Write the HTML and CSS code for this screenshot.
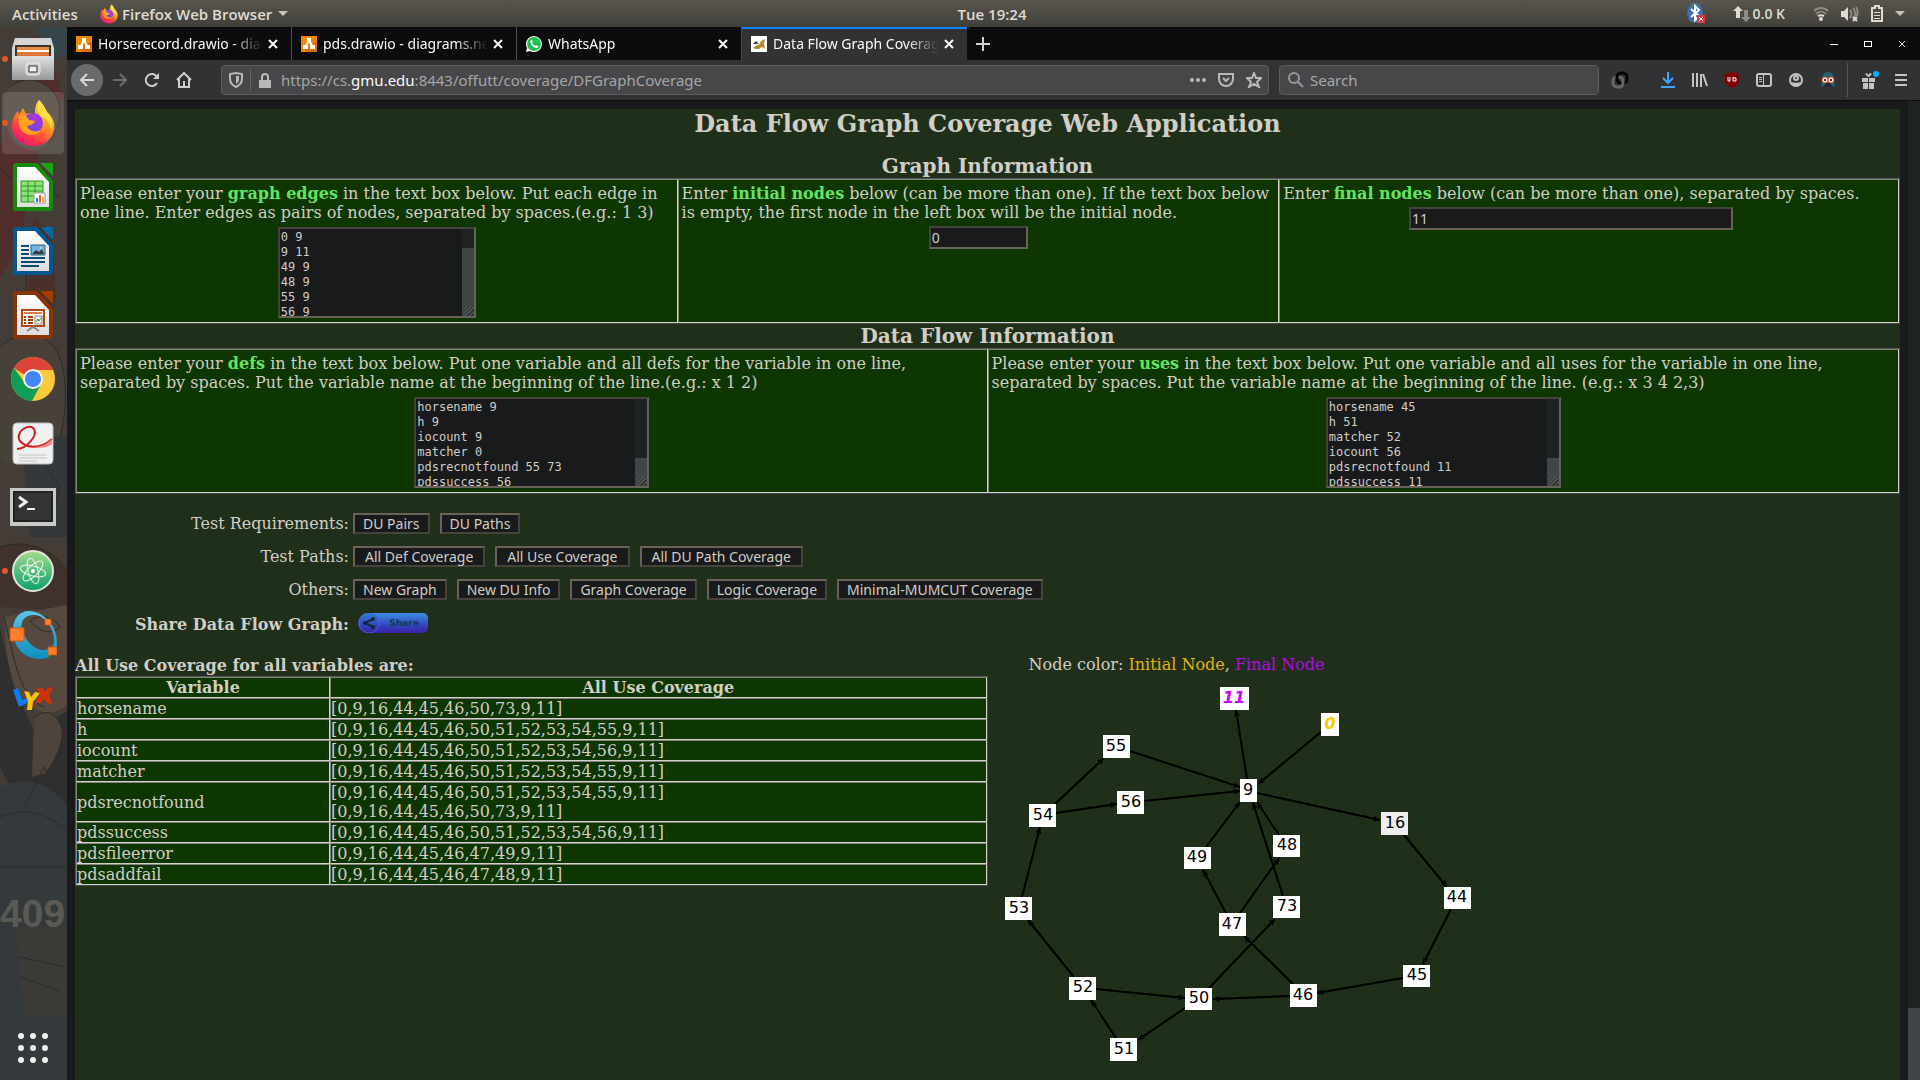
FILE: index.html
```html
<!DOCTYPE html>
<html lang="en">
<head>
<meta charset="utf-8">
<title>Data Flow Graph Coverage Web Application</title>
<link rel="stylesheet" href="styles.css">
</head>
<body>
<svg class="defs" aria-hidden="true">
  <defs>
    <linearGradient id="gFox" x1="0.8" y1="0" x2="0.2" y2="1"><stop offset="0" stop-color="#fff14a"/><stop offset=".4" stop-color="#ff9a1f"/><stop offset=".75" stop-color="#ff3647"/><stop offset="1" stop-color="#e31587"/></linearGradient>
    <radialGradient id="gGlobe" cx=".6" cy=".3" r=".8"><stop offset="0" stop-color="#b833e1"/><stop offset="1" stop-color="#5a4bd8"/></radialGradient>
    <linearGradient id="gSteel" x1="0" y1="0" x2="0" y2="1"><stop offset="0" stop-color="#e2e2e2"/><stop offset="1" stop-color="#989898"/></linearGradient>
    <linearGradient id="gAtom" x1="0" y1="0" x2="0" y2="1"><stop offset="0" stop-color="#a4dc8c"/><stop offset="1" stop-color="#0aa06f"/></linearGradient>
    <linearGradient id="gPaper" x1="0" y1="0" x2="0" y2="1"><stop offset="0" stop-color="#ffffff"/><stop offset="1" stop-color="#dedede"/></linearGradient>
    <linearGradient id="gRing" x1="0" y1="0" x2="0" y2="1"><stop offset="0" stop-color="#5cc4e6"/><stop offset="1" stop-color="#0d8fc0"/></linearGradient>
    <linearGradient id="gShare" x1="0" y1="0" x2="0" y2="1"><stop offset="0" stop-color="#2f7fd8"/><stop offset=".6" stop-color="#3346bd"/><stop offset="1" stop-color="#3d1fa8"/></linearGradient>
    <symbol id="fox" viewBox="0 0 44 48">
      <path d="M28 1c4 4 6 8 8 12 6 5 8 11 7 17-1 10-10 17-21 17S1 39 1 28c0-6 2-12 6-16l1 4 4-7 3 6c4-1 7 0 9 1 0-6 0-10 4-15z" fill="url(#gFox)"/>
      <circle cx="22" cy="24" r="10" fill="url(#gGlobe)"/>
      <path d="M8 16c4-2 8 1 10 5l6 1c-1 3-4 4-8 5 2 5 8 7 14 4-4 6-14 7-19 1-3-4-4-10-3-16z" fill="#ffa222"/>
      <path d="M28 1c4 4 6 8 8 12 5 5 6 12 4 17-1-6-4-10-9-12-4-3-5-10-3-17z" fill="#ffe047"/>
    </symbol>
    <symbol id="drawio" viewBox="0 0 16 16"><path fill="#f08705" d="M0 0h16v16H0z"/><path d="M16 5v11H6L3 13z" fill="#df6c0c"/><path d="M8 4 4 12M8 4l4 8" stroke="#fff" stroke-width="2"/><path d="M6 2h4v4H6zM2 9h5v4H2zM9 9h5v4H9z" fill="#fff"/></symbol>
    <symbol id="close" viewBox="0 0 12 12"><path d="m2 2 8 8M10 2l-8 8" stroke="currentColor" stroke-width="2" fill="none"/></symbol>
    <marker id="tip" viewBox="0 0 8 6" refX="7" refY="3" markerWidth="8" markerHeight="6" markerUnits="userSpaceOnUse" orient="auto"><path d="M0 0l8 3-8 3 2-3z"/></marker>
  </defs>
</svg>

<header class="topbar">
  <button class="top-btn activities">Activities</button>
  <button class="top-btn app"><svg width="18" height="20"><use href="#fox"/></svg>Firefox Web Browser<i class="caret"></i></button>
  <time class="clock">Tue 19:24</time>
  <div class="tray">
    <svg width="18" height="22" viewBox="0 0 18 22"><ellipse cx="8" cy="10" rx="8" ry="10" fill="#3d6eb4"/><path d="m4 6 8 7-4 4V3l4 4-8 7" fill="none" stroke="#fff" stroke-width="2"/><path d="M10 12h8v8h-8z" fill="#e9363c"/><path d="m12 14 4 4m0-4-4 4" stroke="#fff"/></svg>
    <span class="net"><svg width="18" height="18" viewBox="0 0 18 18"><path d="m5 1 5 5H7v7H3V6H0z" fill="#dfdbd2"/><path d="m13 17-5-5h3V5h4v7h3z" fill="#8f8c86"/></svg>0.0 K</span>
    <svg width="16" height="16" viewBox="0 0 16 16" fill="none" stroke="#8d8a84" stroke-width="2"><path d="M1 5c4-4 10-4 14 0M3 8c3-3 7-3 10 0"/><path d="M5 10c2-1 4-1 6 0" stroke="#dfdbd2"/><circle cx="8" cy="13" r="1" stroke="#dfdbd2"/></svg>
    <svg width="18" height="16" viewBox="0 0 18 16"><path d="M0 5h3l4-4v14l-4-4H0z" fill="#dfdbd2"/><path d="M9 4c2 2 2 6 0 8M12 2c3 4 3 8 0 11M15 1c2 3 2 6 1 9" fill="none" stroke="#8d8a84" stroke-width="2"/><path d="m12 11 4 4m0-4-4 4" stroke="#dfdbd2" stroke-width="2"/></svg>
    <svg width="12" height="17" viewBox="0 0 12 17"><path d="M1 3h3V1h4v2h3v13H1z" fill="none" stroke="#dfdbd2" stroke-width="2"/><path d="M3 7h6v1H3zm0 3h6v1H3zm0 3h6v1H3z" fill="#dfdbd2"/></svg>
    <i class="caret"></i>
  </div>
</header>

<div class="desktop">
  <nav class="dock" aria-label="Applications">
    <svg class="wall" viewBox="0 0 67 1053" preserveAspectRatio="xMidYMin slice" aria-hidden="true">
      <path fill="#443c37" d="M0 0h67v1053H0z"/>
      <path d="M0 120l14-50 18-60h10l22 60-20 40-14 50-10 60-20 30z" fill="#512d2b"/>
      <path d="M36 0h31v26l-14 8z" fill="#36454a"/><path d="M34 190l18 20 4 60-14 60-16-50z" fill="#4a2f2b"/>
      <path d="M10 60c14-12 34-8 44 6s6 36-6 50-34 6-40-12-6-34 2-44z" fill="#4e463e"/>
      <path d="M0 320c16-14 40-18 54 0s14 60 6 90-40 40-60 20z" fill="#48413a"/>
      <path d="M22 410h45v100H30z" fill="#34383b"/>
      <path d="M0 520c24-8 52 0 67 24v40L0 580z" fill="#3f322d"/>
      <path d="M4 590l63-12v100c-14 12-30 10-44-6S6 630 4 590z" fill="#554940"/>
      <path d="M0 600l14 60 20 44 33-20v110L20 780 0 740z" fill="#302f2f"/>
      <path d="M34 692c8-10 20-8 26 4s0 30-14 50l-14 4z" fill="#4d443b"/>
      <path d="M0 760c20-10 50-8 67 20v273H0z" fill="#343a3b"/>
      <path d="M16 900h51v90H24z" fill="#3b3b38"/>
      <g fill="none" stroke="#2c2b29" stroke-width="1"><path d="M10 60c14-12 34-8 44 6s6 36-6 50M0 320c16-14 40-18 54 0s14 60 6 90M4 590c12 50 16 80 40 90M30 594c10-8 24-4 30 6-8 8-20 6-30-6zM34 692c8-10 20-8 26 4s0 30-14 50M0 140c10 20 30 10 60 30M6 200c20 20 30 60 8 90M40 430l20 30-10 40M0 520c24-8 52 0 67 24M0 790c20-8 44-8 67 14M0 840h67M20 930l44 10M20 950l40 14M24 780l20-40 14 30"/></g>
      <text class="stencil" x="0" y="900">409</text>
    </svg>
    <button class="launcher running" aria-label="Files"><svg width="44" height="46" viewBox="0 0 44 46"><path d="M4 2h36l3 10v30H1V12z" fill="#d5d5d5"/><path d="M4 9h36v12H4z" fill="#3a3632"/><path d="M6 11h32v3H6z" fill="#e98d45"/><path d="M6 14h32v2H6z" fill="#fff"/><path d="M6 16h32v5H6z" fill="#df7437"/><path d="M1 20h42v24H1z" fill="url(#gSteel)"/><rect x="15" y="27" width="14" height="12" rx="3" fill="#ccc" stroke="#eee"/><path d="M18 30h8v6h-8z" fill="#eee" stroke="#333" stroke-width="1"/></svg></button>
    <button class="launcher running active" aria-label="Firefox"><svg width="44" height="48"><use href="#fox"/></svg></button>
    <button class="launcher" aria-label="Calc"><svg width="40" height="48" viewBox="0 0 40 48"><path d="M3 0h21l16 18v27q0 3-3 3H3q-3 0-3-3V3q0-3 3-3z" fill="#178a0d"/><path d="M27 0h13v13z" fill="#1ba60d"/><path d="M4 4h18l14 15v25H4z" fill="url(#gPaper)"/><path d="M8 18h22v21H8z" fill="#8ee07a"/><path d="M8 18h22v21H8zM8 23h22M8 28h22M8 33h22M15 18v21M22 18v21" fill="none" stroke="#2f9a20"/><path d="M21 30h11v10H21z" fill="#fff" stroke="#999"/><path d="M23 35h2v4h-2z" fill="#2a7ac0"/><path d="M26 32h2v7h-2z" fill="#e5641c"/><path d="M29 34h2v5h-2z" fill="#f2b134"/></svg></button>
    <button class="launcher" aria-label="Writer"><svg width="40" height="48" viewBox="0 0 40 48"><path d="M3 0h21l16 18v27q0 3-3 3H3q-3 0-3-3V3q0-3 3-3z" fill="#045791"/><path d="M27 0h13v13z" fill="#0369a3"/><path d="M4 4h18l14 15v25H4z" fill="url(#gPaper)"/><path d="M8 19h8M8 23h8M8 27h8M8 31h24M8 35h24M8 39h18" stroke="#0a4b76" stroke-width="2"/><path d="M18 18h14v10H18z" fill="#6db7e8" stroke="#2a5a80"/><path d="M19 27l4-4 3 2 3-3 2 5z" fill="#3b3a30"/><circle cx="28" cy="21" r="1" fill="#ffd94a"/></svg></button>
    <button class="launcher" aria-label="Impress"><svg width="40" height="48" viewBox="0 0 40 48"><path d="M3 0h21l16 18v27q0 3-3 3H3q-3 0-3-3V3q0-3 3-3z" fill="#8c3305"/><path d="M27 0h13v13z" fill="#a33e03"/><path d="M4 4h18l14 15v25H4z" fill="url(#gPaper)"/><path d="M9 19h22v16H9z" fill="#fff" stroke="#b4470f" stroke-width="2"/><path d="M11 22h18" stroke="#e07b45" stroke-width="2"/><path d="M11 26h2M11 29h2M11 32h2M15 26h5M15 29h5M15 32h5" stroke="#a33e03" stroke-width="2"/><path d="M22 25h7v8h-7z" fill="#eee" stroke="#888"/><path d="m23 31 2-3 1 2 3-4" fill="none" stroke="#2f9a20"/><path d="m14 40 6-4 6 4" fill="none" stroke="#888" stroke-width="2"/></svg></button>
    <button class="launcher" aria-label="Chrome"><svg width="44" height="44" viewBox="0 0 44 44"><circle cx="22" cy="22" r="22" fill="#fbc93c"/><path d="M3 11a22 22 0 0 1 38 0l1 2H22a9 9 0 0 0-8 5z" fill="#db4437"/><path d="M3 11a22 22 0 0 0 18 33l9-17a9 9 0 0 1-16-1z" fill="#0f9d58"/><circle cx="22" cy="22" r="10" fill="#f2f2f2"/><circle cx="22" cy="22" r="8" fill="#4285f4"/></svg></button>
    <button class="launcher" aria-label="Document Viewer"><svg width="42" height="43" viewBox="0 0 42 43"><rect x="1" y="1" width="40" height="41" rx="4" fill="#f0f0f0" stroke="#bbb"/><path d="M40 17C28 28 14 26 8 19 2 10 18 0 22 7s-8 20-17 20" fill="none" stroke="#cf1f22" stroke-width="2"/><path d="M40 17c-6 6-12 8-18 8 8 2 14 0 18-3z" fill="#e88"/><path d="M7 33h28M7 36h28M7 39h18" stroke="#c4c4c4"/></svg></button>
    <button class="launcher" aria-label="Terminal"><svg width="46" height="38" viewBox="0 0 46 38"><path d="M0 0h46v38H0z" fill="#c9c9c6"/><path d="M3 3h40v31H3z" fill="#222"/><path d="M5 5h36v27H5z" fill="#333535"/><path d="m9 9 7 5-7 5" fill="none" stroke="#eee" stroke-width="3"/><path d="M17 21h8" stroke="#eee" stroke-width="2"/></svg></button>
    <button class="launcher running" aria-label="Atom"><svg width="42" height="42" viewBox="0 0 42 42"><circle cx="21" cy="21" r="20" fill="url(#gAtom)" stroke="#dfe8dc" stroke-width="2"/><g fill="none" stroke="#eaf6ea" stroke-width="1"><ellipse cx="21" cy="21" rx="13" ry="5" transform="rotate(15 21 21)"/><ellipse cx="21" cy="21" rx="13" ry="5" transform="rotate(75 21 21)"/><ellipse cx="21" cy="21" rx="13" ry="5" transform="rotate(135 21 21)"/></g><circle cx="21" cy="21" r="2" fill="#fff"/></svg></button>
    <button class="launcher" aria-label="Octave"><svg width="48" height="48" viewBox="0 0 48 48"><path fill-rule="evenodd" d="M20 0C34 0 48 14 48 32 48 42 40 48 31 48 15 48 4 36 4 19 4 8 10 0 20 0zM25 4c-9 0-14 6-12 14 3 13 14 22 23 21 8-1 10-7 9-13C43 14 34 4 25 4z" fill="url(#gRing)"/><path d="M1 17h14v13H1z" fill="#ff7f2a" stroke="#c65a12" stroke-width="1"/><path d="M36 8h6v6h-6zM39 36h9v8h-9z" fill="#ff7f2a" stroke="#c65a12" stroke-width="1"/></svg></button>
    <button class="launcher" aria-label="LyX"><svg width="42" height="26" viewBox="0 0 42 26"><path d="m1 4 5-2 4 12 6-2 1 4-10 5z" fill="#0a7cf5"/><path d="m12 5 5 1 2 5 4-5 5 1-7 9-1 8h-5l1-9z" fill="#ffc20a"/><path d="m25 2 6 0 2 4 4-5 4 1-4 7 3 9-5-1-3-4-4 4-5 0 5-8z" fill="#cf3206"/></svg></button>
    <button class="launcher apps" aria-label="Show Applications"><svg width="30" height="30" viewBox="0 0 30 30" fill="#eee"><circle cx="3" cy="3" r="3"/><circle cx="15" cy="3" r="3"/><circle cx="27" cy="3" r="3"/><circle cx="3" cy="15" r="3"/><circle cx="15" cy="15" r="3"/><circle cx="27" cy="15" r="3"/><circle cx="3" cy="27" r="3"/><circle cx="15" cy="27" r="3"/><circle cx="27" cy="27" r="3"/></svg></button>
  </nav>

  <div class="window">
    <div class="tabstrip">
      <div class="tab"><svg width="16" height="16"><use href="#drawio"/></svg><span class="tab-title">Horserecord.drawio - diagrams.net</span><button class="x" aria-label="Close tab"><svg width="12" height="12"><use href="#close"/></svg></button></div>
      <div class="tab"><svg width="16" height="16"><use href="#drawio"/></svg><span class="tab-title">pds.drawio - diagrams.net</span><button class="x" aria-label="Close tab"><svg width="12" height="12"><use href="#close"/></svg></button></div>
      <div class="tab"><svg width="16" height="16" viewBox="0 0 16 16"><path d="M0 16l1-4a8 8 0 1 1 3 3z" fill="#fff"/><circle cx="8" cy="8" r="7" fill="#1fc04d"/><path d="M5 4c-2 3 2 8 6 8 1 0 2-2 1-2l-2-1-1 1C8 9 7 8 6 7l1-1-1-2z" fill="#fff"/></svg><span class="tab-title">WhatsApp</span><button class="x" aria-label="Close tab"><svg width="12" height="12"><use href="#close"/></svg></button></div>
      <div class="tab current"><svg width="16" height="16" viewBox="0 0 16 16"><path d="M0 0h16v16H0z" fill="#fff"/><path d="m2 12 4-3 2 0 2-4 4-2-1 5 1 5-3-2-3 2-3 0z" fill="#b98a2c"/><path d="m2 8 3-3 3 3-3 0z" fill="#444"/></svg><span class="tab-title">Data Flow Graph Coverage Web</span><button class="x" aria-label="Close tab"><svg width="12" height="12"><use href="#close"/></svg></button></div>
      <button class="newtab" aria-label="New tab"><svg width="14" height="14" viewBox="0 0 14 14"><path d="M7 0v14M0 7h14" stroke="#d0d0d0" stroke-width="2"/></svg></button>
      <div class="winctl">
        <button aria-label="Minimize"><svg width="8" height="8" viewBox="0 0 8 8"><path d="M0 4h8v1H0z" fill="#fff"/></svg></button>
        <button aria-label="Maximize"><svg width="8" height="6" viewBox="0 0 8 6"><path d="M0 0h8v6H0zM1 1v4h6V1z" fill="#fff" fill-rule="evenodd"/></svg></button>
        <button aria-label="Close"><svg width="6" height="6" viewBox="0 0 6 6"><path d="m0 0 6 6M6 0 0 6" stroke="#ddd" stroke-width="1"/></svg></button>
      </div>
    </div>

    <div class="navbar">
      <button class="nav back" aria-label="Back"><svg width="16" height="16" viewBox="0 0 16 16"><path d="M15 8H2m6-6L2 8l6 6" fill="none" stroke="#d8d8d8" stroke-width="2"/></svg></button>
      <button class="nav" aria-label="Forward"><svg width="16" height="16" viewBox="0 0 16 16"><path d="M1 8h13M8 2l6 6-6 6" fill="none" stroke="#6e6e70" stroke-width="2"/></svg></button>
      <button class="nav" aria-label="Reload"><svg width="16" height="16" viewBox="0 0 16 16"><path d="M13 11a6 6 0 1 1 0-6" fill="none" stroke="#cfcfd0" stroke-width="2"/><path d="M15 1v6H9z" fill="#cfcfd0"/></svg></button>
      <button class="nav" aria-label="Home"><svg width="16" height="16" viewBox="0 0 16 16"><path d="M1 8l7-7 7 7M3 7v8h10V7" fill="none" stroke="#cfcfd0" stroke-width="2"/><path d="M7 9h2v5H7z" fill="#cfcfd0"/></svg></button>
      <div class="field urlbar">
        <svg width="14" height="16" viewBox="0 0 14 16"><path d="M7 1l6 1v5c0 4-2 6-6 8-4-2-6-4-6-8V2z" fill="none" stroke="#b9b9bb" stroke-width="2"/><path d="M7 4v8c2-1 3-3 3-5V4z" fill="#b9b9bb"/></svg>
        <i class="rule"></i>
        <svg class="lock" width="12" height="15" viewBox="0 0 12 15"><path d="M3 7V4a3 3 0 0 1 6 0v3" fill="none" stroke="#b9b9bb" stroke-width="2"/><path d="M0 7h12v8H0z" fill="#b9b9bb"/></svg>
        <div class="url" contenteditable="true" spellcheck="false" role="textbox" aria-label="Address">https://cs.<b>gmu.edu</b>:8443/offutt/coverage/DFGraphCoverage</div>
        <svg width="16" height="16" viewBox="0 0 16 16" fill="#b9b9bb"><circle cx="2" cy="8" r="2"/><circle cx="8" cy="8" r="2"/><circle cx="14" cy="8" r="2"/></svg>
        <svg width="16" height="16" viewBox="0 0 16 16" fill="none" stroke="#b9b9bb" stroke-width="2"><path d="M1 2h14v5a7 7 0 0 1-14 0z"/><path d="m5 6 3 3 3-3"/></svg>
        <svg width="16" height="16" viewBox="0 0 16 16" fill="none" stroke="#b9b9bb" stroke-width="2"><path d="m8 1 2 5 5 0-4 4 2 5-5-3-5 3 2-5-4-4 5 0z"/></svg>
      </div>
      <label class="field search"><svg width="16" height="16" viewBox="0 0 16 16" fill="none" stroke="#9a9a9c" stroke-width="2"><circle cx="6" cy="6" r="5"/><path d="m10 10 5 5"/></svg><input type="text" placeholder="Search" aria-label="Search"></label>
      <div class="tools">
        <button class="nav link" aria-label="Link"><svg width="18" height="18" viewBox="0 0 18 18" fill="none" stroke-width="3"><rect x="2" y="6" width="10" height="10" rx="4" stroke="#666"/><rect x="6" y="2" width="10" height="10" rx="4" stroke="#050505"/><path d="M12 10v2a4 4 0 0 1-4 4" stroke="#666"/></svg></button>
        <button class="nav" aria-label="Downloads"><svg width="14" height="16" viewBox="0 0 14 16"><path d="M7 0v11M2 6l5 5 5-5M0 15h14" fill="none" stroke="#45a1ff" stroke-width="2"/></svg></button>
        <button class="nav" aria-label="Library"><svg width="16" height="14" viewBox="0 0 16 14"><path d="M1 0v14M5 0v14M9 1v13M11 1l4 12" stroke="#c4c4c6" stroke-width="2"/></svg></button>
        <button class="nav" aria-label="uBlock Origin"><svg width="16" height="16" viewBox="0 0 16 16"><path d="M8 0l7 2v6c0 4-3 6-7 8-4-2-7-4-7-8V2z" fill="#800000" stroke="#651717"/><path d="M4 5v4h2V5M9 5v4h3V6H9" fill="none" stroke="#fff" stroke-width="1"/></svg></button>
        <button class="nav" aria-label="Sidebars"><svg width="16" height="14" viewBox="0 0 16 14"><rect x="1" y="1" width="14" height="12" rx="2" fill="none" stroke="#c4c4c6" stroke-width="2"/><path d="M7 1h1v12H7zM3 4h3v1H3zm0 2h3v1H3zm0 2h3v1H3z" fill="#c4c4c6"/></svg></button>
        <button class="nav" aria-label="Account"><svg width="14" height="14" viewBox="0 0 14 14"><circle cx="7" cy="7" r="6" fill="none" stroke="#c4c4c6" stroke-width="2"/><circle cx="7" cy="5" r="2" fill="none" stroke="#c4c4c6" stroke-width="2"/><path d="M3 9c2 1 6 1 8 0l-1 3H4z" fill="#c4c4c6"/></svg></button>
        <button class="nav" aria-label="Dark extension"><svg width="16" height="16" viewBox="0 0 16 16"><path d="M2 6c0-8 12-8 12 0l1 8-4 1H5l-4-1z" fill="#245f70"/><path d="M5 11h6l1 4H4z" fill="#172a35"/><circle cx="5" cy="8" r="3" fill="#f4e4d8" stroke="#e0593a"/><circle cx="11" cy="8" r="3" fill="#f4e4d8" stroke="#e0593a"/><path d="M4 7h2v2H4zm6 0h2v2h-2z" fill="#5a2c25"/></svg></button>
        <i class="divider"></i>
        <button class="nav gift" aria-label="What's new"><svg width="20" height="20" viewBox="-2 0 20 20"><path d="M1 8h6v4H1zm7 0h6v4H8zM2 13h5v6H2zm6 0h5v6H8z" fill="#c4c4c6"/><path d="M7 7 4 4l2-1 1 2 2-2 2 1-3 3z" fill="#c4c4c6"/><circle cx="15" cy="4" r="3" fill="#00b3f4"/></svg></button>
        <button class="nav" aria-label="Menu"><svg width="12" height="12" viewBox="0 0 12 12"><path d="M0 1h12M0 6h12M0 11h12" stroke="#c4c4c6" stroke-width="2"/></svg></button>
      </div>
    </div>

    <div class="viewport">
      <main class="page">
        <h1>Data Flow Graph Coverage Web Application</h1>

        <h2>Graph Information</h2>
        <table class="grid form three">
          <tr>
            <td><label for="edges">Please enter your <b>graph edges</b> in the text box below. Put each edge in one line. Enter edges as pairs of nodes, separated by spaces.(e.g.: 1 3)</label>
              <div class="area narrow"><textarea id="edges" spellcheck="false">0 9
9 11
49 9
48 9
55 9
56 9</textarea><div class="bar"><i class="thumb tall"></i></div></div></td>
            <td><label for="initial">Enter <b>initial nodes</b> below (can be more than one). If the text box below is empty, the first node in the left box will be the initial node.</label>
              <input class="entry short" id="initial" type="text" value="0"></td>
            <td><label for="final">Enter <b>final nodes</b> below (can be more than one), separated by spaces.</label>
              <div class="inset"><input class="entry long" id="final" type="text" value="11"></div></td>
          </tr>
        </table>

        <h2>Data Flow Information</h2>
        <table class="grid form two">
          <tr>
            <td><label for="dfs">Please enter your <b>defs</b> in the text box below. Put one variable and all defs for the variable in one line, separated by spaces. Put the variable name at the beginning of the line.(e.g.: x 1 2)</label>
              <div class="area"><textarea id="dfs" spellcheck="false">horsename 9
h 9
iocount 9
matcher 0
pdsrecnotfound 55 73
pdssuccess 56</textarea><div class="bar"><i class="thumb"></i></div></div></td>
            <td><label for="uses">Please enter your <b>uses</b> in the text box below. Put one variable and all uses for the variable in one line, separated by spaces. Put the variable name at the beginning of the line. (e.g.: x 3 4 2,3)</label>
              <div class="area"><textarea id="uses" spellcheck="false">horsename 45
h 51
matcher 52
iocount 56
pdsrecnotfound 11
pdssuccess 11</textarea><div class="bar"><i class="thumb"></i></div></div></td>
          </tr>
        </table>

        <div class="actions">
          <span class="cap">Test Requirements:</span>
          <div class="set"><button>DU Pairs</button><button>DU Paths</button></div>
          <span class="cap">Test Paths:</span>
          <div class="set paths"><button>All Def Coverage</button><button>All Use Coverage</button><button>All DU Path Coverage</button></div>
          <span class="cap">Others:</span>
          <div class="set"><button>New Graph</button><button>New DU Info</button><button>Graph Coverage</button><button>Logic Coverage</button><button>Minimal-MUMCUT Coverage</button></div>
          <b class="cap share-cap">Share Data Flow Graph:</b>
          <div class="set"><button class="share"><svg width="22" height="20" viewBox="0 0 22 20"><circle cx="11" cy="10" r="10" fill="url(#gShare)" stroke="#4a5fd0"/><path d="M15 6l-8 4 8 4" fill="none" stroke="#102a38" stroke-width="2"/><g fill="#102a38"><circle cx="15" cy="6" r="2"/><circle cx="7" cy="10" r="2"/><circle cx="15" cy="14" r="2"/></g></svg><span>Share</span></button></div>
        </div>

        <div class="results">
          <section>
            <table class="grid coverage">
              <caption>All Use Coverage for all variables are:</caption>
              <tr><th scope="col">Variable</th><th scope="col">All Use Coverage</th></tr>
              <tr><td>horsename</td><td>[0,9,16,44,45,46,50,73,9,11]</td></tr>
              <tr><td>h</td><td>[0,9,16,44,45,46,50,51,52,53,54,55,9,11]</td></tr>
              <tr><td>iocount</td><td>[0,9,16,44,45,46,50,51,52,53,54,56,9,11]</td></tr>
              <tr><td>matcher</td><td>[0,9,16,44,45,46,50,51,52,53,54,55,9,11]</td></tr>
              <tr><td>pdsrecnotfound</td><td>[0,9,16,44,45,46,50,51,52,53,54,55,9,11]<br>[0,9,16,44,45,46,50,73,9,11]</td></tr>
              <tr><td>pdssuccess</td><td>[0,9,16,44,45,46,50,51,52,53,54,56,9,11]</td></tr>
              <tr><td>pdsfileerror</td><td>[0,9,16,44,45,46,47,49,9,11]</td></tr>
              <tr><td>pdsaddfail</td><td>[0,9,16,44,45,46,47,48,9,11]</td></tr>
            </table>
          </section>
          <section class="graph">
            <p>Node color: <span class="initial">Initial Node</span>, <span class="final">Final Node</span></p>
            <svg width="500" height="400" viewBox="8 36 500 400" role="img" aria-label="Data flow graph">
              <g class="edges">
                <path d="M267 139l-11-69"/><path d="M341 92l-63 52"/><path d="M150 111l110 36"/><path d="M75 164l49-46"/><path d="M76 173l61-9"/><path d="M164 161l96-10"/><path d="M277 153l123 27"/><path d="M424 195l43 52"/><path d="M471 269l-28 55"/><path d="M423 338l-86 15"/><path d="M310 356l-77 3"/><path d="M313 344l-49-48"/><path d="M246 273l-23-43"/><path d="M260 273l39-55"/><path d="M299 195l-22-33"/><path d="M226 207l34-45"/><path d="M303 256l-30-93"/><path d="M229 348l66-69"/><path d="M205 368l-47 32"/><path d="M136 398l-25-38"/><path d="M116 349l89 9"/><path d="M94 337l-46-57"/><path d="M42 257l18-70"/>
              </g>
              <g class="nodes">
                <rect x="240" y="47" width="29" height="23"/><rect x="341" y="73" width="18" height="23"/><rect x="123" y="95" width="27" height="23"/><rect x="137" y="151" width="27" height="23"/><rect x="260" y="139" width="17" height="23"/><rect x="49" y="164" width="27" height="23"/><rect x="204" y="207" width="27" height="22"/><rect x="293" y="195" width="27" height="22"/><rect class="dim" x="401" y="172" width="27" height="23"/><rect x="464" y="247" width="27" height="22"/><rect x="25" y="257" width="27" height="23"/><rect x="293" y="256" width="27" height="22"/><rect x="239" y="273" width="27" height="23"/><rect x="423" y="325" width="27" height="22"/><rect x="310" y="344" width="27" height="23"/><rect x="205" y="348" width="27" height="22"/><rect x="89" y="337" width="27" height="23"/><rect x="130" y="398" width="27" height="23"/>
              </g>
              <g class="names">
                <text class="end" x="254" y="63">11</text><text class="start" x="350" y="89">0</text><text x="136" y="111">55</text><text x="151" y="167">56</text><text x="268" y="155">9</text><text x="63" y="180">54</text><text x="217" y="222">49</text><text x="307" y="210">48</text><text x="415" y="188">16</text><text x="477" y="262">44</text><text x="39" y="273">53</text><text x="307" y="271">73</text><text x="252" y="289">47</text><text x="437" y="340">45</text><text x="323" y="360">46</text><text x="219" y="363">50</text><text x="103" y="352">52</text><text x="144" y="414">51</text>
              </g>
            </svg>
          </section>
        </div>
      </main>
      <div class="pagebar"><i></i></div>
    </div>
  </div>
</div>
</body>
</html>
```

FILE: styles.css
```css
* { box-sizing: border-box; }
html, body { height: 100%; }
body {
  margin: 0;
  display: flex;
  flex-direction: column;
  overflow: hidden;
  background: #181a1b;
  color: #d1cdc7;
  font-family: "Noto Sans", "Open Sans", sans-serif;
  font-size: 14px;
}
svg { display: block; flex: none; }
button { font: inherit; color: inherit; padding: 0; border: 0; background: none; }
.defs { position: absolute; width: 0; height: 0; }

/* desktop top bar */
.topbar {
  display: grid;
  grid-template: "left left clock tray" 27px / 67px 1fr auto 1fr;
  align-items: center;
  flex: none;
  padding: 0 15px 0 12px;
  background: linear-gradient(#59554e, #403f3a);
  color: #dfdbd2;
  font: 600 15px "Open Sans", sans-serif;
}
.activities { grid-area: left; justify-self: start; }
.app { grid-area: left; justify-self: start; margin-left: 88px; display: flex; align-items: center; gap: 4px; }
.clock { grid-area: clock; }
.tray { grid-area: tray; justify-self: end; display: flex; align-items: center; gap: 12px; }
.net { display: flex; align-items: center; gap: 2px; margin: 0 16px; font-size: 14px; }
.caret { border: 5px solid transparent; border-top-color: #c9c5bd; border-bottom: 0; }
.app .caret { margin-left: 2px; }

/* launcher column */
.desktop { display: flex; flex: 1; min-height: 0; }
.dock { position: relative; display: flex; flex-direction: column; flex: none; width: 67px; overflow: hidden; }
.wall { position: absolute; top: 0; left: 0; width: 100%; height: 100%; }
.stencil { font: bold 39px "Liberation Sans", sans-serif; fill: #5a5953; }
.launcher { position: relative; display: grid; place-items: center; height: 64px; flex: none; padding-right: 2px; }
.launcher.active::before { content: ""; position: absolute; inset: 1px 3px 1px 2px; border-radius: 4px; background: #ffffff22; }
.launcher svg { position: relative; }
.launcher.running::after { content: ""; position: absolute; left: 2px; top: 29px; width: 6px; height: 6px; border-radius: 3px; background: #e95420; }
.apps { margin-top: auto; }

/* browser window */
.window { display: flex; flex-direction: column; flex: 1; min-width: 0; }
.tabstrip { display: flex; flex: none; height: 33px; background: #0c0c0d; color: #f9f9fa; }
.tab { display: flex; align-items: center; width: 225px; padding: 0 12px 0 9px; border-right: 1px solid #4f4f51; }
.tab.current { background: #323234; border-top: 2px solid #0a84ff; border-right: 0; padding-bottom: 2px; }
.tab-title { flex: 1; min-width: 0; margin: 0 4px 0 6px; overflow: hidden; white-space: nowrap; mask-image: linear-gradient(to right, #000 calc(100% - 32px), transparent); }
.newtab { width: 32px; display: grid; place-items: center; }
.winctl { display: flex; align-items: center; margin-left: auto; margin-right: 1px; }
.winctl button { width: 34px; display: grid; place-items: center; }

.navbar { display: flex; align-items: center; flex: none; height: 41px; padding: 0 3px 0 4px; background: #323234; border-bottom: 1px solid #0c0c0d; }
.nav { display: grid; place-items: center; width: 32px; height: 32px; flex: none; }
.nav.back { border-radius: 16px; background: #6a6a6c; margin-right: 1px; }
.field { display: flex; align-items: center; height: 30px; border: 1px solid #5c5c5f; border-radius: 4px; background: #474749; font-size: 15px; }
.urlbar { flex: 1; margin: 0 10px 0 21px; padding: 0 6px 0 7px; gap: 12px; color: #a5a5a7; }
.urlbar .rule { width: 1px; height: 20px; margin: 0 -4px 0 -5px; background: #67676a; }
.url { flex: 1; margin-left: -2px; white-space: nowrap; overflow: hidden; outline: 0; }
.url b { font-weight: 400; color: #f9f9fa; }
.search { width: 320px; padding: 0 8px; gap: 6px; }
.search input { flex: 1; min-width: 0; padding: 0; border: 0; outline: 0; background: none; color: #f9f9fa; font: inherit; }
.search input::placeholder { color: #a9a9ab; opacity: 1; }
.tools { display: flex; align-items: center; }
.link { margin: 0 16px 0 5px; }
.divider { width: 1px; height: 34px; margin: 0 5px 0 3px; background: #58585a; }

/* page */
.viewport { display: flex; flex: 1; min-height: 0; }
.page { flex: 1; min-width: 0; margin: 8px 8px 0; overflow: hidden; background: #202f1a; font-family: "DejaVu Serif", serif; font-size: 16px; line-height: 19px; }
.pagebar { display: flex; flex-direction: column; justify-content: flex-end; width: 12px; background: #1e2223; }
.pagebar i { height: 72px; background: #404648; }
h1 { margin: 0 0 15px; font-size: 24px; line-height: 30px; text-align: center; }
h2 { margin: 0; font-size: 20px; line-height: 24px; text-align: center; }

.grid { width: 100%; table-layout: fixed; border-collapse: separate; border-spacing: 0; border: 1px solid; border-color: #55595c #46494b #46494b #55595c; }
.grid td, .grid th { border: 1px solid; border-color: #85827d #d5d1cb #d5d1cb #85827d; background: #0e3600; }
.form { height: 146px; }
.form td { padding: 4px 3px 2px; vertical-align: top; }
.form label { display: block; }
.form b { color: #62e462; }
.three td:nth-child(-n+2) { width: 33%; }
.area { display: flex; width: 235px; height: 91px; margin: 5px auto 1px; border: 2px solid; border-color: #46423c #6b6257 #6b6257 #46423c; background: #181a1b; }
.area.narrow { width: 198px; }
.area textarea { flex: 1; min-width: 0; padding: 1px 1px 0; border: 0; outline: 0; resize: none; overflow: hidden; background: none; color: #d1cdc7; font: 12px/15px "DejaVu Sans Mono", monospace; }
.bar { display: flex; flex-direction: column; justify-content: flex-end; width: 12px; background: #1e2223; }
.thumb { height: 28px; background: repeating-linear-gradient(135deg, #2b2f30 0 1px, #4c5153 1px 3px) no-repeat right bottom / 10px 10px, #404648; }
.thumb.tall { height: 68px; }
.entry { display: block; height: 23px; margin: 4px auto 5px; padding: 0 1px; border: 2px solid; border-color: #46423c #6b6257 #6b6257 #46423c; background: #181a1b; color: #d1cdc7; font: 14px "Noto Sans", sans-serif; }
.short { width: 99px; }
.long { width: 324px; }
.inset { padding-right: 36px; }

.actions { display: grid; grid-template-columns: 274px 1fr; column-gap: 4px; grid-auto-rows: 33px; align-items: center; padding: 13px 0 16px; }
.cap { text-align: right; }
.share-cap { padding-top: 4px; }
.set { display: flex; gap: 10px; }
.set button { height: 21px; padding: 0 8px; border: 2px solid; border-color: #6b6257 #46423c #46423c #6b6257; background: #181a1b; font: 14px/17px "Noto Sans", sans-serif; }
.set.paths button { padding: 0 10px; }
.set .share { display: flex; align-items: center; width: 70px; height: 20px; margin-left: 5px; padding: 0; border: 0; border-radius: 10px 5px 5px 10px; background: linear-gradient(#3d8fe0, #3346bd 60%, #3d1fa8); color: #123c50; font: bold 9px "DejaVu Sans", sans-serif; }
.share span { flex: 1; text-align: center; }

.results { display: grid; grid-template-columns: 1fr 1fr; }
.coverage caption { text-align: left; font-weight: 700; line-height: 21px; }
.coverage td, .coverage th { padding: 0; }
.coverage th:first-child { width: 254px; }
.graph p { margin: 0 0 2px 41px; }
.initial { color: #e0b40c; }
.final { color: #b40be0; }
.edges path { fill: none; stroke: #000; stroke-width: 2px; marker-end: url(#tip); }
.nodes rect { fill: #fff; }
.nodes .dim { fill: #eee; }
.names text { font: 16px "DejaVu Sans", sans-serif; text-anchor: middle; fill: #000; }
.names .end, .names .start { font-weight: 700; font-style: oblique; }
.names .end { fill: #c800ff; }
.names .start { fill: #ffc800; }
```
